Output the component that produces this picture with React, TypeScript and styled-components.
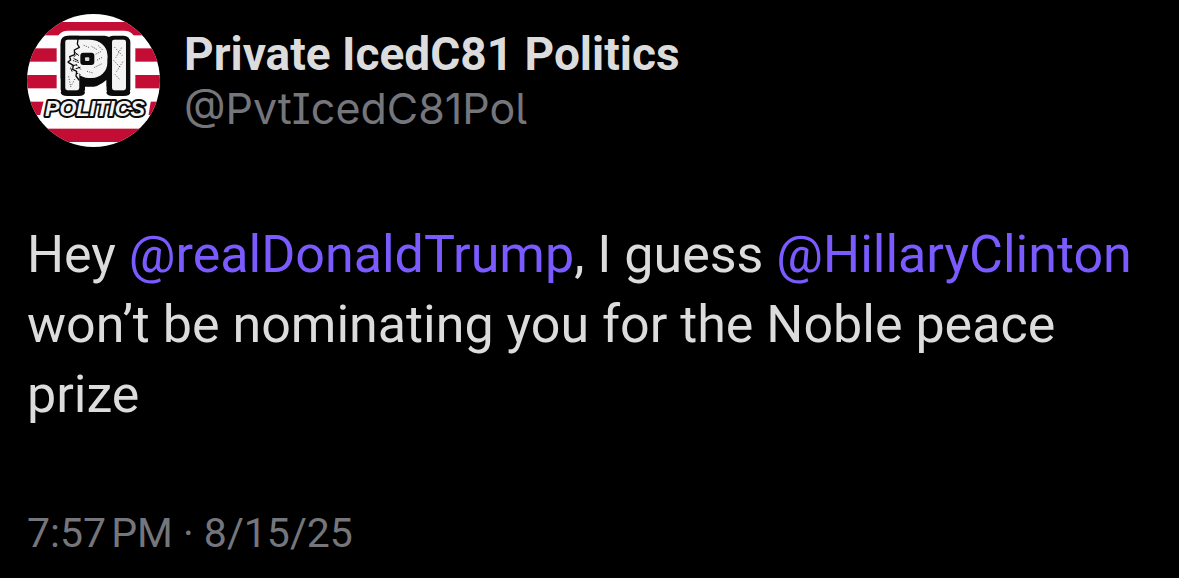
import React from "react";
import styled, { createGlobalStyle } from "styled-components";

const colors = {
  background: "#000000",
  text: "#dcdcdc",
  muted: "#74767b",
  link: "#7b5bff",
  stripe: "#c40d35",
};

const GlobalStyle = createGlobalStyle`
  *, *::before, *::after { box-sizing: border-box; }
  body {
    margin: 0;
    background: ${colors.background};
    color: ${colors.text};
    font-family: Roboto, "Liberation Sans", sans-serif;
  }
`;

const Post = styled.article`
  display: flex;
  flex-direction: column;
  gap: 73px;
  padding: 14px 27px;
`;

const Header = styled.header`
  display: flex;
  align-items: center;
  gap: 24px;
`;

const AvatarLink = styled.a`
  display: block;
  flex: none;
  width: 133px;
  height: 133px;
  border-radius: 50%;
  overflow: hidden;
`;

const AvatarArt = styled.svg`
  display: block;
  width: 100%;
  height: 100%;
`;

const Author = styled.div`
  display: flex;
  flex-direction: column;
  min-width: 0;
`;

const AuthorLink = styled.a`
  line-height: 54px;
  text-decoration: none;
`;

const DisplayName = styled(AuthorLink)`
  color: ${colors.text};
  font-size: 46px;
  font-weight: 700;
`;

const Handle = styled(AuthorLink)`
  color: ${colors.muted};
  font-family: Inter, Roboto, sans-serif;
  font-feature-settings: "cv05", "cv08";
  font-size: 43px;
`;

const Body = styled.p`
  margin: 0;
  font-size: 52px;
  line-height: 70px;
`;

const Mention = styled.a`
  color: ${colors.link};
  text-decoration: none;
`;

const Timestamp = styled.time`
  color: ${colors.muted};
  font-size: 41px;
  line-height: 60px;
`;

const LogoLetter = styled.text`
  font-family: "Liberation Sans", sans-serif;
  font-size: 200px;
  font-weight: 700;
`;

const LogoWord = styled.text`
  font-family: "Liberation Sans", sans-serif;
  font-size: 65px;
  font-style: italic;
  font-weight: 700;
  paint-order: stroke;
`;

function Avatar() {
  return (
    <AvatarArt viewBox="21 18 399 399" role="img" aria-label="PI Politics">
      <rect x="21" y="18" width="399" height="399" fill="#fff" />
      {[42, 121, 201, 281, 362].map((y) => (
        <rect key={y} x="21" y={y} width="399" height="40" fill={colors.stripe} />
      ))}
      <rect x="110" y="68" width="236" height="206" rx="32" fill="#fff" />
      <g fill="#0b0b0b">
        <rect x="122" y="83" width="158" height="153" rx="26" />
        <rect x="122" y="83" width="73" height="181" rx="20" />
        <rect x="259" y="83" width="72" height="181" rx="20" />
      </g>
      <path d="M195 262 L195 243 Q236 238 259 216 L259 262 Z" fill="#fff" />
      <rect x="160" y="98" width="102" height="112" rx="46" fill="#f4f4f4" />
      <g strokeLinejoin="round" fill="#f4f4f4" stroke="#f4f4f4" strokeWidth="13">
        <LogoLetter x="129" y="241">P</LogoLetter>
        <LogoLetter x="269" y="241">I</LogoLetter>
      </g>
      <g fill="none" stroke="#0b0b0b" strokeLinecap="round" strokeLinejoin="round">
        <path d="M174 94 L172 108 L178 118 L163 126 L164 140 L149 146 L152 156 L144 162" strokeWidth="4" />
        <path d="M146 164 L160 172 L158 184 L170 190 L168 204 L177 216" strokeWidth="4" />
        <path d="M166 134 L176 142 M156 174 L170 170 M162 152 L174 158 M168 182 L180 178 M152 180 L156 190" strokeWidth="3" />
        <path d="M160 158 L178 164 M170 172 L184 186 M162 146 L172 138 M172 196 L182 200" strokeWidth="3" strokeDasharray="2 5" />
        <path d="M216 116 L230 124 M228 138 L244 130 M232 156 L250 146 M224 178 L244 168 M202 190 L222 196 M236 114 L248 126 M192 112 L206 118" strokeWidth="2" strokeDasharray="1 6" />
        <path d="M284 118 L306 142 M304 120 L288 148 M282 158 L302 180 M308 162 L290 190 M286 200 L300 216 M146 206 L152 236 M164 214 L150 240" strokeWidth="2" strokeDasharray="1 7" />
      </g>
      <rect x="181" y="134" width="42" height="37" rx="9" fill="#0b0b0b" />
      <rect x="195" y="148" width="13" height="11" rx="3" fill="#d8d8d8" />
      <path d="M78 264 L392 264 L380 336 L60 336 Z" fill="#fff" stroke="#fff" strokeWidth="6" strokeLinejoin="round" />
      <path d="M122 252 h73 v0 q0 12 -20 12 h-33 q-20 0 -20 -12 Z M259 252 h72 q0 12 -20 12 h-32 q-20 0 -20 -12 Z" fill="#0b0b0b" />
      <LogoWord x="75" y="325" fill="#f4f4f4" stroke="#0b0b0b" strokeWidth="12" strokeLinejoin="round">
        POLITICS
      </LogoWord>
    </AvatarArt>
  );
}

export default function App() {
  return (
    <>
      <GlobalStyle />
      <Post>
        <Header>
          <AvatarLink href="#profile">
            <Avatar />
          </AvatarLink>
          <Author>
            <DisplayName href="#profile">Private IcedC81 Politics</DisplayName>
            <Handle href="#profile">@PvtIcedC81Pol</Handle>
          </Author>
        </Header>
        <Body>
          Hey <Mention href="#realDonaldTrump">@realDonaldTrump</Mention>, I guess{" "}
          <Mention href="#HillaryClinton">@HillaryClinton</Mention> won’t be nominating you for the
          Noble peace prize
        </Body>
        <Timestamp dateTime="2025-08-15T19:57">7:57{"\u202f"}PM · 8/15/25</Timestamp>
      </Post>
    </>
  );
}
